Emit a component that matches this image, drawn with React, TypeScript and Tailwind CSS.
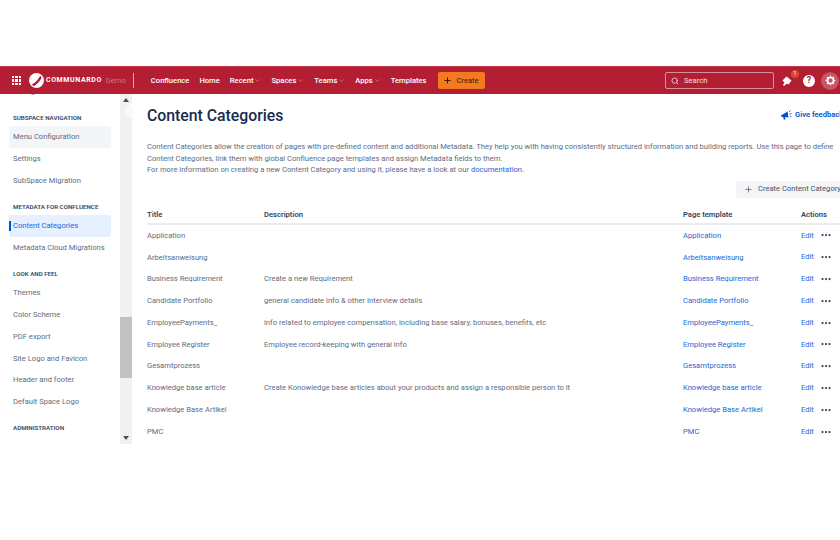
import React from 'react';
import { ChevronDown, ChevronLeft, Plus, Search, MoreHorizontal } from 'lucide-react';

const font = "font-['Roboto','Open_Sans',sans-serif]";

const navGroups = [
  { title: 'SUBSPACE NAVIGATION', items: ['Menu Configuration', 'Settings', 'SubSpace Migration'] },
  { title: 'METADATA FOR CONFLUENCE', items: ['Content Categories', 'Metadata Cloud Migrations'] },
  { title: 'LOOK AND FEEL', items: ['Themes', 'Color Scheme', 'PDF export', 'Site Logo and Favicon', 'Header and footer', 'Default Space Logo'] },
  { title: 'ADMINISTRATION', items: ['Manage Users'] },
];

const rows = [
  ['Application', ''],
  ['Arbeitsanweisung', ''],
  ['Business Requirement', 'Create a new Requirement'],
  ['Candidate Portfolio', 'general candidate info & other Interview details'],
  ['EmployeePayments_', 'info related to employee compensation, including base salary, bonuses, benefits, etc'],
  ['Employee Register', 'Employee record-keeping with general info'],
  ['Gesamtprozess', ''],
  ['Knowledge base article', 'Create Konowledge base articles about your products and assign a responsible person to it'],
  ['Knowledge Base Artikel', ''],
  ['PMC', ''],
];

const NavLink = ({ label, children }: { label: string; children?: React.ReactNode }) => (
  <span className="flex items-center gap-[1px] text-[7.6px] font-medium text-white whitespace-nowrap">
    {label}
    {children}
  </span>
);

const Caret = () => <ChevronDown size={7} strokeWidth={1.5} className="text-white/70" />;

const AppGrid = () => (
  <div className="grid grid-cols-3 gap-[1px] w-[9px] h-[9px]">
    {Array.from({ length: 9 }).map((_, i) => (
      <span key={i} className="w-[2.33px] h-[2.33px] bg-white" />
    ))}
  </div>
);

const Logo = () => (
  <svg width="15" height="15" viewBox="0 0 16 16">
    <circle cx="8" cy="8" r="8" fill="#fff" />
    <path d="M3 12 C6 11 9 8 12 3 L13.5 5 C11 9 9 12 5 14 Z" fill="#b31e33" />
  </svg>
);

const Gear = () => (
  <svg width="11" height="11" viewBox="0 0 14 14" fill="none" stroke="#fff">
    <circle cx="7" cy="7" r="3.8" strokeWidth="2" />
    <path
      d="M7 .8v2M7 11.2v2M.8 7h2M11.2 7h2M2.6 2.6l1.4 1.4M10 10l1.4 1.4M11.4 2.6L10 4M4 10l-1.4 1.4"
      strokeWidth="1.6"
    />
  </svg>
);

const Header = () => (
  <header className="relative z-10 h-[28px] shrink-0 bg-[#b31e33] flex items-center pl-[12px] border-t border-[#c23a4c]">
    <AppGrid />
    <div className="ml-[8px] flex items-center gap-[2px]">
      <Logo />
      <span className="text-[7px] font-bold tracking-[0.6px] text-white whitespace-nowrap">COMMUNARDO</span>
      <span className="ml-[2px] text-[7.6px] text-white/40">Demo</span>
    </div>
    <div className="ml-[7px] w-px h-[15px] bg-white/60" />
    <nav className="ml-[17px] flex items-center gap-[10px]">
      <NavLink label="Confluence" />
      <NavLink label="Home" />
      <NavLink label="Recent"><Caret /></NavLink>
      <NavLink label="Spaces"><Caret /></NavLink>
      <NavLink label="Teams"><Caret /></NavLink>
      <NavLink label="Apps"><Caret /></NavLink>
      <NavLink label="Templates" />
    </nav>
    <button className="ml-[11px] h-[17px] w-[47px] rounded-[2px] bg-[#f47a20] flex items-center justify-center gap-[4px] text-[7.6px] text-[#3b1a10]">
      <Plus size={9} strokeWidth={2.5} className="text-[#2b1208]" />
      Create
    </button>
    <div className="ml-auto flex items-center">
      <div className="w-[109px] h-[17px] rounded-[2px] border border-white/50 flex items-center pl-[5px] gap-[5px] text-[7.6px] text-white/85">
        <Search size={8} strokeWidth={2} className="text-white" />
        Search
      </div>
      <div className="relative ml-[7px] w-[12px] h-[12px]">
        <svg width="12" height="12" viewBox="0 0 12 12" fill="#fff">
          <path d="M5.5 1.5 L10.5 5.5 L7.5 9.5 L6 8.5 L3 11 L2 10 L3.5 7.5 L1.5 5.5 Z" />
        </svg>
        <span className="absolute -top-[5px] right-[-6px] w-[8px] h-[8px] rounded-full bg-[#d9482b] flex items-center justify-center text-[5px] leading-none text-white">1</span>
      </div>
      <div className="ml-[10px] w-[12px] h-[12px] rounded-full bg-white flex items-center justify-center text-[9px] font-bold leading-none text-[#b31e33]">?</div>
      <div className="ml-[6px] mr-[1px] w-[18px] h-[18px] rounded-full bg-white/25 flex items-center justify-center">
        <Gear />
      </div>
    </div>
  </header>
);

const Sidebar = () => (
  <aside className="w-[120px] shrink-0 overflow-hidden pl-[9px] pr-[9px]">
    <div className="-mt-[13.5px] h-[22px] flex items-center pl-[4px] text-[7.6px] text-[#5e6c84]">Configuration</div>
    {navGroups.map((group) => (
      <div key={group.title} className="mt-[10px] mb-[3px]">
        <div className="h-[12px] pl-[4px] flex items-center text-[6.2px] font-semibold text-[#344563] whitespace-nowrap">{group.title}</div>
        <div className="mt-[1.5px] flex flex-col">
          {group.items.map((item) => {
            const active = item === 'Content Categories';
            const hover = item === 'Menu Configuration';
            return (
              <div
                key={item}
                className={`relative h-[21.8px] w-[102px] rounded-[2px] pl-[4px] flex items-center text-[7.6px] whitespace-nowrap ${
                  active ? 'bg-[#e6f0ff] text-[#1d66d6]' : hover ? 'bg-[#f4f5f7] text-[#5e6c84]' : 'text-[#5e6c84]'
                }`}
              >
                {active && <span className="absolute left-0 top-[6px] w-[2px] h-[10px] bg-[#0052cc]" />}
                {item}
              </div>
            );
          })}
        </div>
      </div>
    ))}
  </aside>
);

const Scrollbar = () => (
  <div className="w-[12px] shrink-0 bg-[#f1f1f1] flex flex-col items-center justify-between py-[4px] relative">
    <span className="w-0 h-0 border-x-[3px] border-x-transparent border-b-[4px] border-b-[#505050]" />
    <div className="absolute left-0 top-[223px] w-[12px] h-[61px] bg-[#c1c1c1]" />
    <span className="w-0 h-0 border-x-[3px] border-x-transparent border-t-[4px] border-t-[#505050]" />
    <div className="absolute left-[5px] top-[10px] w-[14px] h-[14px] rounded-full bg-white/60 flex items-center justify-center">
      <ChevronLeft size={7} strokeWidth={1.5} className="text-[#dfe1e6]" />
    </div>
  </div>
);

const Content = () => (
  <main className="flex-1 min-w-0 overflow-hidden pl-[15px]">
    <div className="flex items-start justify-between w-[720px] pt-[10px]">
      <h1 className="text-[15.8px] leading-[24px] font-medium text-[#172b4d] whitespace-nowrap">Content Categories</h1>
      <div className="w-[87px] mt-[5px] flex items-center gap-[3px] text-[7.6px] font-semibold text-[#0052cc] whitespace-nowrap">
        <svg width="12" height="12" viewBox="0 0 12 12" fill="#0052cc">
          <path d="M1 6.5 L7.5 2.5 L8.5 8.5 L5 8 L5.5 10.5 L3.8 10.5 L3 7.8 L1.5 8 Z" />
          <path d="M9 3 L10.5 1.5 M9.5 5 L11.5 4.5 M9.8 7 L11.3 7.8" stroke="#0052cc" strokeWidth="0.9" fill="none" />
        </svg>
        Give feedback
      </div>
    </div>
    <div className="mt-[13px] text-[7.6px] leading-[11.5px] text-[#5e6c84] whitespace-nowrap">
      <p>Content Categories allow the creation of pages with pre-defined content and additional Metadata. They help you with having consistently structured information and building reports. Use this page to define</p>
      <p>Content Categories, link them with global Confluence page templates and assign Metadata fields to them.</p>
      <p>
        For more information on creating a new Content Category and using it, please have a look at our{' '}
        <span className="text-[#1d66d6]">documentation</span>.
      </p>
    </div>
    <div className="mt-[5px] flex w-[720px]">
      <button className="ml-[589px] h-[17px] w-[131px] rounded-l-[2px] bg-[#f4f5f7] flex items-center pl-[8px] gap-[5px] text-[7.6px] text-[#42526e] whitespace-nowrap">
        <Plus size={9} strokeWidth={1.75} className="text-[#344563]" />
        Create Content Category
      </button>
    </div>
    <div className="mt-[10px] w-[720px]">
      <div className="grid grid-cols-[117px_419px_118px_1fr] h-[17px] items-center border-b-2 border-[#ebecf0] text-[7.6px] font-semibold text-[#344563]">
        <span>Title</span>
        <span>Description</span>
        <span>Page template</span>
        <span>Actions</span>
      </div>
      {rows.map(([title, desc]) => (
        <div key={title} className="grid grid-cols-[117px_419px_118px_1fr] h-[21.8px] items-center text-[7.6px] text-[#5e6c84] whitespace-nowrap">
          <span>{title}</span>
          <span>{desc}</span>
          <span className="text-[#1d66d6]">{title}</span>
          <span className="flex items-center text-[#1d66d6]">
            Edit
            <MoreHorizontal size={12} strokeWidth={2.5} className="ml-[6px] text-[#344563]" />
          </span>
        </div>
      ))}
    </div>
  </main>
);

export default function App() {
  return (
    <div className={`w-[840px] h-[540px] overflow-hidden bg-white pt-[66px] ${font}`}>
      <Header />
      <div className="h-[350px] flex overflow-hidden">
        <Sidebar />
        <Scrollbar />
        <Content />
      </div>
    </div>
  );
}
